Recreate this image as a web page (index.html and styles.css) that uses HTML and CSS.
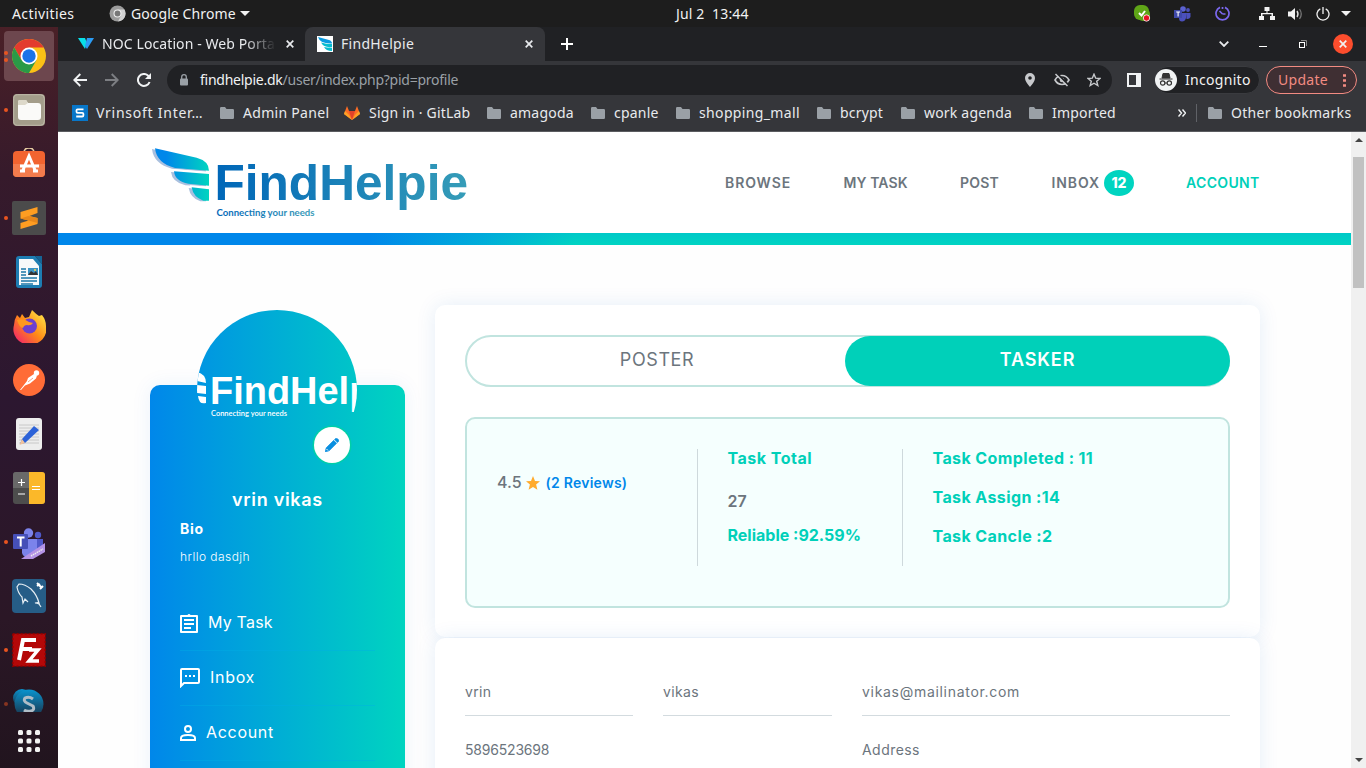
FILE: index.html
```html
<!DOCTYPE html>
<html lang="en">
<head>
<meta charset="utf-8">
<title>FindHelpie</title>
<link rel="stylesheet" href="styles.css">
</head>
<body>
<svg width="0" height="0" class="defs">
  <defs>
    <linearGradient id="brand" x1="0" y1="0" x2="1" y2="0"><stop offset="0" stop-color="#0087ea"/><stop offset=".2" stop-color="#0087ea"/><stop offset="1" stop-color="#00d4c0"/></linearGradient>
    <linearGradient id="word" gradientUnits="userSpaceOnUse" x1="66" y1="0" x2="317" y2="0"><stop offset="0" stop-color="#0067b8"/><stop offset="1" stop-color="#359cb8"/></linearGradient>
    <linearGradient id="tagline" gradientUnits="userSpaceOnUse" x1="66" y1="0" x2="165" y2="0"><stop offset="0" stop-color="#0067b8"/><stop offset="1" stop-color="#359cb8"/></linearGradient>
    <linearGradient id="avatarfill" gradientUnits="userSpaceOnUse" x1="-47" y1="0" x2="208" y2="0"><stop offset="0" stop-color="#0087ea"/><stop offset="1" stop-color="#00d4c0"/></linearGradient>
    <linearGradient id="fox" x1="1" y1="0" x2="0" y2="1"><stop offset="0" stop-color="#fff44f"/><stop offset=".5" stop-color="#ff8a16"/><stop offset="1" stop-color="#f0107a"/></linearGradient>
    <linearGradient id="skypefade" x1="0" y1="0" x2="0" y2="1"><stop offset="0" stop-color="#0a94cf"/><stop offset=".8" stop-color="#17405c"/></linearGradient>
    <clipPath id="round"><circle cx="80" cy="80" r="80"/></clipPath>
    <symbol id="folder" viewBox="0 0 14 12"><path d="M0 1.200Q0 0 1.200 0H5l1.500 2h6.300Q14 2 14 3.200v7.600Q14 12 12.800 12H1.200Q0 12 0 10.800Z" fill="#9aa0a6"/></symbol>
    <symbol id="cross" viewBox="0 0 8 8"><path d="M.7.7l6.600 6.600M7.300.7L.7 7.300" stroke="currentColor" stroke-width="1.700"/></symbol>
  </defs>
</svg>

<header class="topbar">
  <span class="activities">Activities</span>
  <div class="app-menu">
    <svg width="17" height="17" viewBox="0 0 17 17"><circle cx="8.500" cy="8.500" r="8" fill="#9b9b9b"/><path d="M8.500 4.500h7A8 8 0 0 1 9 16.500l3.200-6z" fill="#d2d2d2"/><circle cx="8.500" cy="8.500" r="4" fill="#eee"/><circle cx="8.500" cy="8.500" r="2.900" fill="#777"/></svg>
    <span class="app-name">Google Chrome</span>
    <i class="caret"></i>
  </div>
  <span class="clock">Jul 2&nbsp; 13:44</span>
  <div class="tray">
    <svg class="t-skype" width="17" height="17" viewBox="0 0 17 17"><rect x="0" y="0" width="15" height="15" rx="6" fill="#5fa517"/><rect x="3" y="3" width="13" height="13" rx="6" fill="#5fa517"/><path d="M5 8l2.500 2.500L11 6" stroke="#fff" stroke-width="2" fill="none"/><circle cx="12.500" cy="13" r="3.200" fill="#e81224" stroke="#fff" stroke-width=".8"/></svg>
    <svg class="t-teams" width="17" height="16" viewBox="0 0 17 16"><circle cx="9" cy="3" r="2.800" fill="#5b61d0"/><circle cx="14" cy="4" r="1.900" fill="#4a50b8"/><path d="M5 7h7v5q-1 3.500-4 3.500T5 12zM12 7h4.500v4q-1 2.500-4 2z" fill="#4b50bb"/><rect x="0" y="4" width="8" height="8" fill="#3f48a8"/><path d="M2.200 6h3.800M4.100 6v4.500" stroke="#fff" stroke-width="1.100"/></svg>
    <svg class="t-clock" width="15" height="15" viewBox="0 0 15 15"><path d="M5 1.400a6.500 6.500 0 1 0 5 0M7.500 1v2M7.500 8L4.500 5M7.500 8h3" stroke="#7b68ee" stroke-width="1.700" fill="none"/></svg>
    <svg class="t-net" width="16" height="13" viewBox="0 0 16 13"><path d="M5.500 0h5v4h-2v2H14v3h2v4h-5V9h1.500V7.300h-9V9H5v4H0V9h2V6h5.500V4h-2z" fill="#f2f2f2"/></svg>
    <svg class="t-vol" width="15" height="14" viewBox="0 0 15 14"><path d="M0 4.500h3L7 1v12L3 9.500H0z" fill="#f2f2f2"/><path d="M9 4q2 3 0 6" stroke="#ddd" stroke-width="1.400" fill="none"/><path d="M11.500 2q3.500 5 0 10" stroke="#777" stroke-width="1.300" fill="none"/></svg>
    <svg class="t-power" width="14" height="14" viewBox="0 0 14 14"><path d="M4.300 1.800a6 6 0 1 0 5.400 0M7 0v7" stroke="#f2f2f2" stroke-width="1.300" fill="none"/></svg>
    <i class="caret"></i>
  </div>
</header>

<div class="desktop">
  <aside class="dock">
    <div class="apps">
      <div class="app current double"><svg width="34" height="34" viewBox="0 0 34 34"><circle cx="17" cy="17" r="17" fill="#fbc116"/><path d="M2.300 8.500A17 17 0 0 1 31.700 8.500H17L9.600 21.300z" fill="#e33b2e"/><path d="M2.300 8.500A17 17 0 0 0 17 34l7.400-12.700H9.600z" fill="#2a9a47"/><circle cx="17" cy="17" r="8.500" fill="#fff"/><circle cx="17" cy="17" r="6.700" fill="#1a73e8"/></svg></div>
      <div class="app open"><svg width="32" height="32" viewBox="0 0 32 32"><rect width="32" height="32" rx="4" fill="#a39d8a"/><rect x=".7" y=".7" width="30.600" height="30.600" rx="4" fill="none" stroke="#bdb8a8"/><path d="M5 8q0-2 2-2h6l2 3h10q3 0 3 3v11q0 3-3 3H8q-3 0-3-3z" fill="#fafaf8"/><path d="M5 11V8q0-2 2-2h6l2 3-3 2z" fill="#ddd9ca"/></svg></div>
      <div class="app"><svg width="32" height="32" viewBox="0 0 32 32"><path d="M11 5q0-5 5-5t5 5" stroke="#e8cfa4" stroke-width="1.600" fill="none"/><rect y="3" width="32" height="26" rx="4" fill="#f26430"/><path d="M0 16h32v9q0 4-4 4H4q-4 0-4-4z" fill="#f37c4d"/><path d="M10 22l6-14 6 14M7 18h19M7 23h5M20 23h5" stroke="#fff" stroke-width="3" fill="none"/></svg></div>
      <div class="app open"><svg width="34" height="34" viewBox="0 0 34 34"><rect width="34" height="34" rx="2" fill="#4b4b4b"/><path d="M8.500 11l17-5v6l-8 3 8 2v6L8.500 28v-6l8-2.500-8-2z" fill="#ff9d21"/><path d="M8.500 17.500l8-2.500 9 2v5l-9-2.500z" fill="#e8871a"/></svg></div>
      <div class="app"><svg width="26" height="32" viewBox="0 0 26 32"><path d="M3 0h16l7 8v21q0 3-3 3H3q-3 0-3-3V3q0-3 3-3z" fill="#1d7db2"/><path d="M3 3h14l6 7v19H3z" fill="#f7f9fa"/><path d="M19 0h7v8z" fill="#156596"/><path d="M5 13h5M5 16h5M5 19h5M5 22h16M5 25h16M5 28h12" stroke="#1d77a8" stroke-width="1.300"/><rect x="12" y="12" width="10" height="7" fill="#3a93c5"/><path d="M12 19l3-4 3 2 2-2 2 4z" fill="#333"/><circle cx="19" cy="14" r="1" fill="#f8d648"/></svg></div>
      <div class="app"><svg width="33" height="33" viewBox="0 0 33 33"><path d="M4 5l3 3 2-4 3 4 4-1 3-7q4 4 7 6l3-1q4 5 4 11a16.500 15.500 0 1 1-32-1Q1 10 4 5z" fill="url(#fox)"/><circle cx="16.500" cy="16" r="7.500" fill="#6c3fcf"/><path d="M4 10q7-2 12 2l4 1q-2 3-6 2-3 0-4 3-4-1-6-8z" fill="#ff9820"/></svg></div>
      <div class="app"><svg width="32" height="32" viewBox="0 0 32 32"><circle cx="16" cy="16" r="16" fill="#ff6c37"/><path d="M7 26l7-9 1-3 6-4 3 1.500-1 3-6 5-5 2-4 4.500z" fill="#fff"/><circle cx="23.500" cy="9" r="2.700" fill="#fff"/><path d="M15 18l5-4" stroke="#f5a386"/></svg></div>
      <div class="app"><svg width="26" height="32" viewBox="0 0 26 32"><rect width="26" height="32" rx="3" fill="#ededed"/><path d="M3 7h20M3 10h20M3 13h20M3 16h20M3 19h20M3 22h20M3 25h20" stroke="#c8c8c8"/><path d="M18 8l5 4L9 25l-5 1 2-5z" fill="#2c62d8"/><path d="M6 21l3 4-5.500 2z" fill="#f2c39b"/></svg></div>
      <div class="app"><svg width="32" height="32" viewBox="0 0 32 32"><rect width="32" height="32" rx="3" fill="#4d4d4d"/><path d="M0 16V3q0-3 3-3h13v16z" fill="#696969"/><path d="M16 0h13q3 0 3 3v26q0 3-3 3H16z" fill="#fbb829"/><path d="M5 10.500h7M8.500 7v7M5 22h7M19 14.500h8M19 17.500h8" stroke="#fff" stroke-width="1.200"/></svg></div>
      <div class="app open"><svg class="teams" width="32" height="32" viewBox="0 0 32 32"><circle cx="15.500" cy="5" r="4.700" fill="#7b83eb"/><circle cx="25" cy="7" r="3.200" fill="#5059c9"/><path d="M9 11h15v12q-3 8-9 7-5-1-6-5z" fill="#7b83eb"/><path d="M24 11h6v10q-2 5-6 5z" fill="#5059c9"/><rect x="0" y="6" width="15" height="15" rx="1" fill="#4650b8"/><path d="M4 9.500h7.500M7.700 9.500v9" stroke="#fff" stroke-width="2"/><path d="M8 31L32 15v9L20 31z" fill="#b493e6"/><path d="M18 28l12-7" stroke="#eee" stroke-width="1.500" stroke-dasharray="1.500 .7"/></svg></div>
      <div class="app"><svg width="34" height="34" viewBox="0 0 34 34"><rect width="34" height="34" rx="4" fill="#265d87"/><path d="M29 28l-2-3q-2-1-4-1 3-1 4 0-2-8-8-14Q13 5 7 5L5 8q1 6 5 10l1 6 2-4 3 3" stroke="#e5edf3" stroke-width="1.200" fill="none"/><path d="M25 4l5 5M25 7l3-2M28 10l3-3" stroke="#fff" stroke-width="2"/></svg></div>
      <div class="app open"><svg width="34" height="34" viewBox="0 0 34 34"><rect x=".7" y=".7" width="32.600" height="32.600" fill="#b40808" stroke="#8a0000" stroke-width="1.400" stroke-dasharray="2 2"/><path d="M7 27l4-20h13M9 16h11" stroke="#fff" stroke-width="4" fill="none"/><path d="M17 17h9l-9 11h10" stroke="#fff" stroke-width="3.500" fill="none"/></svg></div>
      <div class="app open faded"><svg width="32" height="32" viewBox="0 0 32 32"><circle cx="9" cy="10" r="9" fill="url(#skypefade)"/><circle cx="16" cy="16" r="14.500" fill="url(#skypefade)"/><path d="M20 11q-4-3-8-1-2 3 2 5t6 3q2 4-2 5-4 1-7-1" stroke="#b0bdc7" stroke-width="3" fill="none"/></svg></div>
    </div>
    <svg class="grid" width="22" height="22" viewBox="0 0 22 22"><g fill="#f2f2f2"><rect width="5" height="5" rx="1.500"/><rect x="8.500" width="5" height="5" rx="1.500"/><rect x="17" width="5" height="5" rx="1.500"/><rect y="8.500" width="5" height="5" rx="1.500"/><rect x="8.500" y="8.500" width="5" height="5" rx="1.500"/><rect x="17" y="8.500" width="5" height="5" rx="1.500"/><rect y="17" width="5" height="5" rx="1.500"/><rect x="8.500" y="17" width="5" height="5" rx="1.500"/><rect x="17" y="17" width="5" height="5" rx="1.500"/></g></svg>
  </aside>

  <main class="window">
    <div class="tabs">
      <div class="tab noc">
        <svg width="16" height="12" viewBox="0 0 16 12"><path d="M0 0h7l2 5-2 6z" fill="#08e0e8"/><path d="M9 0h7L9 11l-2-3z" fill="#2b9cf5"/></svg>
        <span class="tab-title long">NOC Location - Web Portal</span>
        <svg class="x" width="8" height="8"><use href="#cross"/></svg>
      </div>
      <div class="tab active">
        <svg width="16" height="16" viewBox="0 0 16 16"><rect width="16" height="16" fill="#fff"/><path d="M1 1l11 3q3 1 3 3.500Q3 8 1 1z" fill="#0a9be0"/><path d="M4 6.500q5 1.500 11 1.500v3Q7 12 4 6.500zM7 11q4 1 8 .7V15q-6 0-8-4z" fill="#06bccf"/></svg>
        <span class="tab-title">FindHelpie</span>
        <svg class="x" width="8" height="8"><use href="#cross"/></svg>
      </div>
      <svg class="plus" width="12" height="12" viewBox="0 0 12 12"><path d="M6 0v12M0 6h12" stroke="#fff" stroke-width="2"/></svg>
      <div class="controls">
        <svg width="10" height="6" viewBox="0 0 10 6"><path d="M.7.7L5 5 9.300.7" stroke="#e8eaed" stroke-width="1.800" fill="none"/></svg>
        <svg class="min" width="8" height="8" viewBox="0 0 8 8"><path d="M0 6.500h8" stroke="#fff"/></svg>
        <svg class="max" width="8" height="8" viewBox="0 0 8 8"><path d="M2 .5h5.500V6" stroke="#888" fill="none"/><rect x=".5" y="2.500" width="5" height="5" fill="none" stroke="#fff"/></svg>
        <span class="quit"><svg width="8" height="8"><use href="#cross"/></svg></span>
      </div>
    </div>

    <div class="toolbar">
      <svg width="14" height="14" viewBox="0 0 14 14"><path d="M14 7H1.500M7.300 1L1.300 7l6 6" stroke="#f1f3f4" stroke-width="1.900" fill="none"/></svg>
      <svg class="fwd" width="14" height="14" viewBox="0 0 14 14"><path d="M0 7h12.500M6.700 1l6 6-6 6" stroke="#7d7f83" stroke-width="1.900" fill="none"/></svg>
      <svg class="reload" width="14" height="14" viewBox="0 0 14 14"><path d="M12.600 9A6 6 0 1 1 11.200 2.700L12.500 4" stroke="#f1f3f4" stroke-width="2" fill="none"/><path d="M14 0v6H8z" fill="#f1f3f4"/></svg>
      <div class="address">
        <svg width="8" height="12" viewBox="0 0 8 12"><rect y="4.500" width="8" height="7" rx="1" fill="#9aa0a6"/><path d="M1.700 5V3a2.300 2.300 0 0 1 4.600 0v2" stroke="#9aa0a6" stroke-width="1.300" fill="none"/></svg>
        <span class="url"><b>findhelpie.dk</b>/user/index.php?pid=profile</span>
        <svg class="pin" width="10" height="14" viewBox="0 0 10 14"><path fill-rule="evenodd" d="M5 0a5 5 0 0 1 5 5q0 3.500-5 9-5-5.500-5-9a5 5 0 0 1 5-5zm0 3.200a1.800 1.800 0 1 0 0 3.600 1.800 1.800 0 0 0 0-3.600z" fill="#c7c9cc"/></svg>
        <svg class="eye" width="16" height="14" viewBox="0 0 16 14"><path d="M1 7q2.500-4.500 7-4.500T15 7q-2.500 4.500-7 4.500T1 7z" fill="none" stroke="#c7c9cc" stroke-width="1.600"/><circle cx="8" cy="7" r="2.300" fill="#c7c9cc"/><path d="M2.500 0l12 12" stroke="#202124" stroke-width="2"/><path d="M1.500 1l12 12" stroke="#c7c9cc" stroke-width="1.500"/></svg>
        <svg class="star" width="14" height="14" viewBox="0 0 14 14"><path d="M7 1.200l1.700 4 4.300.3-3.300 2.800 1.100 4.200L7 10.200l-3.800 2.300 1.100-4.200L1 5.500l4.300-.3z" stroke="#c7c9cc" stroke-width="1.400" fill="none"/></svg>
      </div>
      <svg class="panel" width="14" height="14" viewBox="0 0 14 14"><path fill-rule="evenodd" d="M0 0h14v14H0zM2 2v10h7V2z" fill="#f1f3f4"/></svg>
      <div class="incognito">
        <svg width="22" height="22" viewBox="0 0 22 22"><circle cx="11" cy="11" r="11" fill="#f1f3f4"/><path d="M7 9l1-4.500h6L15 9zM4.500 10h13" fill="#333" stroke="#333" stroke-width="1"/><g fill="none" stroke="#333" stroke-width="1.200"><circle cx="7.700" cy="14" r="2.200"/><circle cx="14.300" cy="14" r="2.200"/><path d="M10 14h2"/></g></svg>
        <span>Incognito</span>
      </div>
      <div class="update"><span>Update</span><svg width="3" height="13" viewBox="0 0 3 13"><path d="M0 1.500h3M0 6.500h3M0 11.500h3" stroke="#f28b82" stroke-width="2.600"/></svg></div>
    </div>

    <div class="bookmarks">
      <div class="bm b1"><svg width="16" height="16" viewBox="0 0 16 16"><rect width="16" height="16" fill="#0877c9"/><path d="M11.500 4.300h-6q-1 0-1 1.200v1q0 1.300 1 1.300h4.700q1.200 0 1.200 1.200v1.200q0 1.300-1.200 1.300h-6" fill="none" stroke="#fff" stroke-width="1.800"/></svg><span>Vrinsoft Inter…</span></div>
      <div class="bm b2"><svg width="14" height="12"><use href="#folder"/></svg><span>Admin Panel</span></div>
      <div class="bm b3"><svg width="16" height="14" viewBox="0 0 16 14"><path d="M8 14L0 8l3-8 2 5h6l2-5 3 8z" fill="#fc6d26"/><path d="M8 14L5 5h6z" fill="#e24329"/><path d="M8 14L0 8l1-3 4 4zM8 14l8-6-1-3-4 4z" fill="#fca326"/></svg><span>Sign in · GitLab</span></div>
      <div class="bm b4"><svg width="14" height="12"><use href="#folder"/></svg><span>amagoda</span></div>
      <div class="bm b5"><svg width="14" height="12"><use href="#folder"/></svg><span>cpanle</span></div>
      <div class="bm b6"><svg width="14" height="12"><use href="#folder"/></svg><span>shopping_mall</span></div>
      <div class="bm b7"><svg width="14" height="12"><use href="#folder"/></svg><span>bcrypt</span></div>
      <div class="bm b8"><svg width="14" height="12"><use href="#folder"/></svg><span>work agenda</span></div>
      <div class="bm b9"><svg width="14" height="12"><use href="#folder"/></svg><span>Imported</span></div>
      <svg class="more" width="8" height="8" viewBox="0 0 8 8"><path d="M.5.5L3.500 4l-3 3.500M4.500.5L7.500 4l-3 3.500" stroke="#f1f3f4" stroke-width="1.400" fill="none"/></svg>
      <div class="bm other"><svg width="14" height="12"><use href="#folder"/></svg><span>Other bookmarks</span></div>
    </div>

    <div class="viewport">
      <div class="page">
        <div class="site-header">
          <svg class="logo" width="320" height="84" viewBox="0 0 320 84">
            <g transform="translate(-10 -10) scale(.33333)">
              <path transform="translate(-9 2)" fill="#a9c0df" d="M45 55L170 83Q207 93 207 124L105 114Q50 100 45 55zM102 124L207 132V167L145 164Q105 154 102 124zM155 172L207 178V212H190Q160 202 155 172z"/>
              <path fill="#fff" d="M100 117L210 125V132L100 124zM150 166L210 170V178L150 171zM207 90h8v125h-8z"/>
              <path fill="url(#brand)" d="M45 55L170 83Q207 93 207 122L105 114Q50 100 45 55zM102 124L207 132V167L145 161Q105 154 102 124zM155 172L207 178V212H190Q160 202 155 172z"/>
            </g>
            <text x="64.500" y="60" class="wordmark" textLength="253.500" lengthAdjust="spacingAndGlyphs">FindHelpie</text>
            <text x="66.500" y="76" class="tag" textLength="98" lengthAdjust="spacingAndGlyphs">Connecting your needs</text>
          </svg>
          <nav class="nav">
            <a class="n1">BROWSE</a><a class="n2">MY TASK</a><a class="n3">POST</a><a class="n4">INBOX</a><span class="count">12</span><a class="n5">ACCOUNT</a>
          </nav>
        </div>
        <div class="stripe"></div>
        <div class="content">
          <aside class="profile">
            <div class="avatar">
              <svg width="160" height="160" viewBox="0 0 160 160"><g clip-path="url(#round)"><rect width="160" height="160" fill="url(#avatarfill)"/><path d="M0 62q9 2 9 11L0 71zM0 75l9 1v8l-9-1zM1 86l8 1v6q-7 2-8-7z" fill="#fff"/><text x="13" y="94" class="avatar-word" textLength="194" lengthAdjust="spacingAndGlyphs">FindHelpie</text><text x="14" y="106" class="avatar-tag" textLength="76" lengthAdjust="spacingAndGlyphs">Connecting your needs</text></g></svg>
              <span class="edit"><svg width="14" height="14" viewBox="0 0 14 14"><path d="M9.500 1.500l1-1q1-.8 2 .2l1 1q.8 1 0 1.800l-1 1zM8.700 2.300l3 3L4.200 12.800 0 14l1.200-4.200z" fill="#0a8fe0" stroke="#0a8fe0" stroke-width=".6"/><path d="M1.500 11l1.500 1.500" stroke="#fff"/></svg></span>
            </div>
            <h2>vrin vikas</h2>
            <h3>Bio</h3>
            <p>hrllo dasdjh</p>
            <div class="menu">
              <a class="m1"><svg width="18" height="20" viewBox="0 0 18 20"><path d="M1 3h16v16H1z" stroke="#fff" stroke-width="2" fill="none" stroke-linejoin="round"/><path d="M4 7h10M4 11h10M4 15h7" stroke="#fff" stroke-width="2"/><path d="M6 4V2h1.500a1.700 1.700 0 0 1 3 0H12v2z" fill="#fff"/></svg><span>My Task</span></a>
              <a class="m2"><svg width="20" height="20" viewBox="0 0 20 20"><path d="M1 18V2q0-1 1-1h16q1 0 1 1v12q0 1-1 1H4z" fill="none" stroke="#fff" stroke-width="2"/><path d="M5 8h2m2 0h2m2 0h2" stroke="#fff" stroke-width="2"/></svg><span>Inbox</span></a>
              <a class="m3"><svg width="16" height="16" viewBox="0 0 16 16"><circle cx="8" cy="4" r="3" fill="none" stroke="#fff" stroke-width="2"/><path d="M1 15v-2q0-3 7-3t7 3v2z" fill="none" stroke="#fff" stroke-width="2"/></svg><span>Account</span></a>
            </div>
          </aside>
          <section class="panels">
            <div class="card first">
              <div class="switch"><span class="poster">POSTER</span><span class="tasker">TASKER</span></div>
              <div class="stats">
                <div class="rating"><span class="score">4.5</span><svg width="14" height="14" viewBox="0 0 14 14"><path d="M7 0l2 4.900 5 .4-3.900 3.300 1.300 5.100L7 11l-4.400 2.700 1.300-5.100L0 5.300l5-.4z" fill="#ffab2d"/></svg><span class="reviews">(2 Reviews)</span></div>
                <div class="total"><b class="tt">Task Total</b><span>27</span><b class="rel">Reliable :92.59%</b></div>
                <div class="counts"><b>Task Completed : 11</b><b>Task Assign :14</b><b>Task Cancle :2</b></div>
              </div>
            </div>
            <div class="card form">
              <div class="field">vrin</div><div class="field">vikas</div><div class="field mail">vikas@mailinator.com</div>
              <div class="field phone">5896523698</div><div class="field addr">Address</div>
            </div>
          </section>
        </div>
      </div>
      <div class="scrollbar"><i class="up"></i><i class="thumb"></i><i class="down"></i></div>
    </div>
  </main>
</div>
</body>
</html>
```
FILE: styles.css
```css
* { box-sizing: border-box; }
body { margin: 0; width: 1366px; height: 768px; overflow: hidden; font-family: "Noto Sans", sans-serif; font-size: 14px; color: #f2f2f2; background: #2c1628; }
svg { display: block; flex: none; }
.defs { position: absolute; }
span, a, b { white-space: nowrap; }

.topbar { height: 27px; background: #1d1d1d; display: flex; align-items: center; }
.activities { margin-left: 12px; width: 97px; flex: none; letter-spacing: .4px; }
.app-menu { display: flex; align-items: center; width: 567px; flex: none; }
.app-name { margin-left: 5px; width: 109px; letter-spacing: .1px; }
.caret { border: 5px solid transparent; border-top-color: #f2f2f2; border-bottom: 0; flex: none; }
.clock { width: 458px; flex: none; letter-spacing: .15px; }
.tray { display: flex; align-items: center; }
.t-teams { margin-left: 23px; }
.t-clock { margin-left: 24px; }
.t-net { margin-left: 29px; }
.t-vol { margin-left: 13px; }
.t-power { margin-left: 13px; }
.tray .caret { margin-left: 11px; }

.desktop { display: flex; height: 741px; }
.dock { width: 58px; flex: none; background: linear-gradient(#4a2027 0, #361a2b 20%, #2c1730 50%, #2b1726 80%, #21141e 100%); }
.apps { height: 685px; overflow: hidden; padding-top: 2px; }
.app { height: 54px; display: grid; place-items: center; position: relative; }
.app.current { background: #6d474e; width: 50px; height: 50px; margin: 2px 4px; border-radius: 4px; }
.app.open::before, .app.double::before { content: ""; position: absolute; left: 4px; top: 25px; width: 4px; height: 4px; border-radius: 50%; background: #e95420; }
.app.double::before { left: 0; top: 20px; box-shadow: 0 7px #e95420; }
.app.faded::before { opacity: .5; }
.teams { margin-top: 4px; }
.grid { margin: 18px 0 0 18px; }

.window { width: 1308px; }
.tabs { height: 34px; background: #202124; display: flex; align-items: center; }
.tab { height: 34px; display: flex; align-items: center; flex: none; color: #e8eaed; }
.noc { width: 247px; padding-left: 20px; }
.tab-title { margin: -2px 0 0 8px; width: 184px; letter-spacing: .3px; }
.tab-title.long { width: 174px; overflow: hidden; letter-spacing: .1px; -webkit-mask-image: linear-gradient(90deg, #000 82%, transparent); mask-image: linear-gradient(90deg, #000 82%, transparent); }
.noc .x { margin-left: 10px; }
.active { width: 240px; padding-left: 12px; background: #35363a; border-radius: 8px 8px 0 0; }
.plus { margin-left: 16px; }
.controls { display: flex; align-items: center; margin-left: 646px; }
.min { margin-left: 30px; }
.max { margin-left: 32px; }
.quit { width: 20px; height: 20px; border-radius: 50%; background: #fc4d2d; display: grid; place-items: center; margin-left: 26px; }

.toolbar { height: 36px; background: #35363a; display: flex; align-items: center; padding: 2px 9px 0 15px; }
.toolbar span { margin-top: -2px; }
.fwd { margin-left: 18px; }
.reload { margin-left: 18px; }
.address { height: 30px; width: 945px; margin-left: 16px; border-radius: 15px; background: #202124; display: flex; align-items: center; padding-left: 13px; flex: none; }
.toolbar .url { width: 812px; margin-left: 12px; color: #9aa0a6; letter-spacing: -.25px; flex: none; }
.url b { font-weight: 400; color: #f1f3f4; }
.pin { margin-left: 13px; }
.eye { margin-left: 19px; }
.star { margin-left: 17px; }
.panel { margin-left: 15px; }
.incognito { margin-left: 13px; width: 106px; height: 28px; border-radius: 14px; background: #202124; border: 1px solid #3a3b3f; display: flex; align-items: center; gap: 8px; flex: none; letter-spacing: .3px; }
.update { margin-left: 6px; width: 91px; height: 28px; border: 1px solid #f28b82; border-radius: 14px; background: #3f2f33; color: #f28b82; display: flex; align-items: center; padding: 0 10px 0 11px; justify-content: space-between; flex: none; letter-spacing: .3px; }

.bookmarks { height: 35px; background: #35363a; border-bottom: 1px solid #5b5c60; display: flex; align-items: center; padding: 0 0 2px 14px; color: #e8eaed; letter-spacing: .2px; }
.bm { display: flex; align-items: center; gap: 9px; flex: none; }
.bm span { margin-top: -2px; }
.b1 { width: 148px; gap: 8px; letter-spacing: .75px; }
.b2 { width: 124px; letter-spacing: .3px; }
.b3 { width: 143px; }
.b4 { width: 104px; }
.b5 { width: 85px; }
.b6 { width: 141px; letter-spacing: .35px; }
.b7 { width: 84px; }
.b8 { width: 128px; }
.b9 { width: 149px; }
.other { margin-left: 10px; padding-left: 11px; border-left: 1px solid #606267; height: 18px; letter-spacing: .3px; }

.viewport { height: 636px; display: flex; background: #fefefe; font-family: Inter, sans-serif; }
.page { width: 1293px; overflow: hidden; flex: none; }
.site-header { height: 101px; background: #fff; display: flex; padding-left: 92px; }
.logo { margin-top: 8px; }
.wordmark { font: 700 49.500px "Liberation Sans", sans-serif; fill: url(#word); }
.tag { font: 700 10px Lato, sans-serif; fill: url(#tagline); }
.nav { display: flex; align-items: center; margin-left: 255px; font-size: 14px; font-weight: 600; color: #6c757d; }
.n1 { width: 118.500px; letter-spacing: .9px; }
.n2 { width: 116.500px; letter-spacing: .1px; }
.n3 { width: 91.500px; letter-spacing: .2px; }
.n4 { width: 52.500px; letter-spacing: .9px; }
.count { width: 30px; height: 26px; border-radius: 50%; background: #00d4c0; color: #fff; font-weight: 800; display: grid; place-items: center; flex: none; }
.n5 { margin-left: 52px; color: #00d0b9; letter-spacing: .35px; }
.stripe { height: 12px; background: linear-gradient(rgba(0,135,234,.15), rgba(0,135,234,0)), linear-gradient(90deg, #0087ea 24%, #00b0d8 33%, #00d4c2 40%); }
.content { display: flex; padding: 60px 0 0 92px; align-items: flex-start; }

.profile { width: 255px; height: 480px; margin-top: 80px; border-radius: 10px 10px 0 0; padding: 0 30px; background: linear-gradient(90deg, #0087ea, #00d4c0); box-shadow: 0 0 20px rgba(0,100,220,.08); color: #fff; }
.avatar { height: 85px; width: 160px; margin: 0 auto 0 17px; position: relative; }
.avatar > svg { position: absolute; top: -75px; left: 0; }
.avatar-word { font: 700 39px "Liberation Sans", sans-serif; fill: #fff; }
.avatar-tag { font: 600 7.500px Lato, sans-serif; fill: #fff; }
.edit { position: absolute; left: 117px; top: 42px; width: 36px; height: 36px; border-radius: 50%; background: #fff; display: grid; place-items: center; box-shadow: 0 0 0 1.500px #00cfa8; }
.profile h2 { margin: 16px 0 0; font-size: 18px; line-height: 28px; font-weight: 600; text-align: center; letter-spacing: .7px; }
.profile h3 { margin: 5px 0 0; font-size: 14px; line-height: 20px; font-weight: 700; letter-spacing: .7px; }
.profile p { margin: 8px 0 0; font-size: 12px; line-height: 20px; font-weight: 300; letter-spacing: .45px; }
.menu { margin-top: 29px; font-size: 16px; }
.menu a { height: 55px; display: flex; align-items: center; border-bottom: 1px solid rgba(0,175,230,.4); gap: 10px; }
.menu span { letter-spacing: .2px; margin-top: -2px; }
.menu .m2 span, .menu .m3 span { letter-spacing: .7px; }

.panels { margin-left: 30px; width: 825px; }
.card { background: #fff; border-radius: 10px; box-shadow: 0 0 20px rgba(0,100,200,.1); padding: 30px; }
.first { height: 332px; }
.switch { height: 52px; border: 2px solid #c1e4df; border-radius: 26px; display: flex; font-size: 18px; line-height: 46px; color: #6c757d; }
.poster { width: 380px; margin-right: -2px; text-align: center; flex: none; letter-spacing: .6px; }
.tasker { width: 385px; flex: none; height: 50px; margin: -1px 0; line-height: 48px; border-radius: 25px; background: #00d0b9; color: #fff; font-weight: 600; text-align: center; letter-spacing: .9px; }
.stats { margin-top: 30px; height: 191px; border: 2px solid #c1e4df; border-radius: 10px; background: #f5fffe; display: flex; padding: 30px; font-size: 16px; color: #00d0b9; }
.rating { width: 201px; height: 117px; border-right: 1px solid #ced9dc; display: flex; align-items: flex-start; padding-top: 20px; line-height: 26px; color: #6c757d; font-weight: 500; }
.rating svg { margin: 7px 6px 0 4px; }
.reviews { font-size: 14px; font-weight: 600; color: #0087ea; letter-spacing: .25px; padding-top: 1px; }
.total { width: 205px; height: 117px; padding-left: 29.500px; border-right: 1px solid #ced9dc; display: flex; flex-direction: column; line-height: 20px; }
.total .tt, .counts b:first-child { margin-top: -1px; }
.tt { letter-spacing: .5px; }
.total span { color: #6c757d; font-weight: 600; margin: 23px 0 14px; }
.counts { padding-left: 29.500px; display: flex; flex-direction: column; line-height: 20px; gap: 19px; letter-spacing: .4px; }
.stats b { font-weight: 700; }
.form { margin-top: 1px; height: 200px; display: grid; grid-template-columns: 168px 169px 368px; gap: 0 30px; grid-template-rows: 48px 58px; font-size: 14px; color: #6c757d; line-height: 20px; letter-spacing: .35px; }
.field { border-bottom: 1px solid #d3dbdf; display: flex; align-items: flex-end; padding-bottom: 13px; }
.phone { grid-column: span 2; letter-spacing: -.2px; }
.mail { letter-spacing: .7px; }
.addr { letter-spacing: .45px; }

.scrollbar { width: 15px; background: #f0f0f0; display: flex; flex-direction: column; align-items: center; }
.up { border: 4px solid transparent; border-top: 0; border-bottom-color: #444; margin-top: 6px; }
.down { border: 4px solid transparent; border-bottom: 0; border-top-color: #444; margin-top: auto; margin-bottom: 6px; }
.thumb { width: 11px; height: 131px; background: #c1c1c1; margin-top: 15px; }
```
